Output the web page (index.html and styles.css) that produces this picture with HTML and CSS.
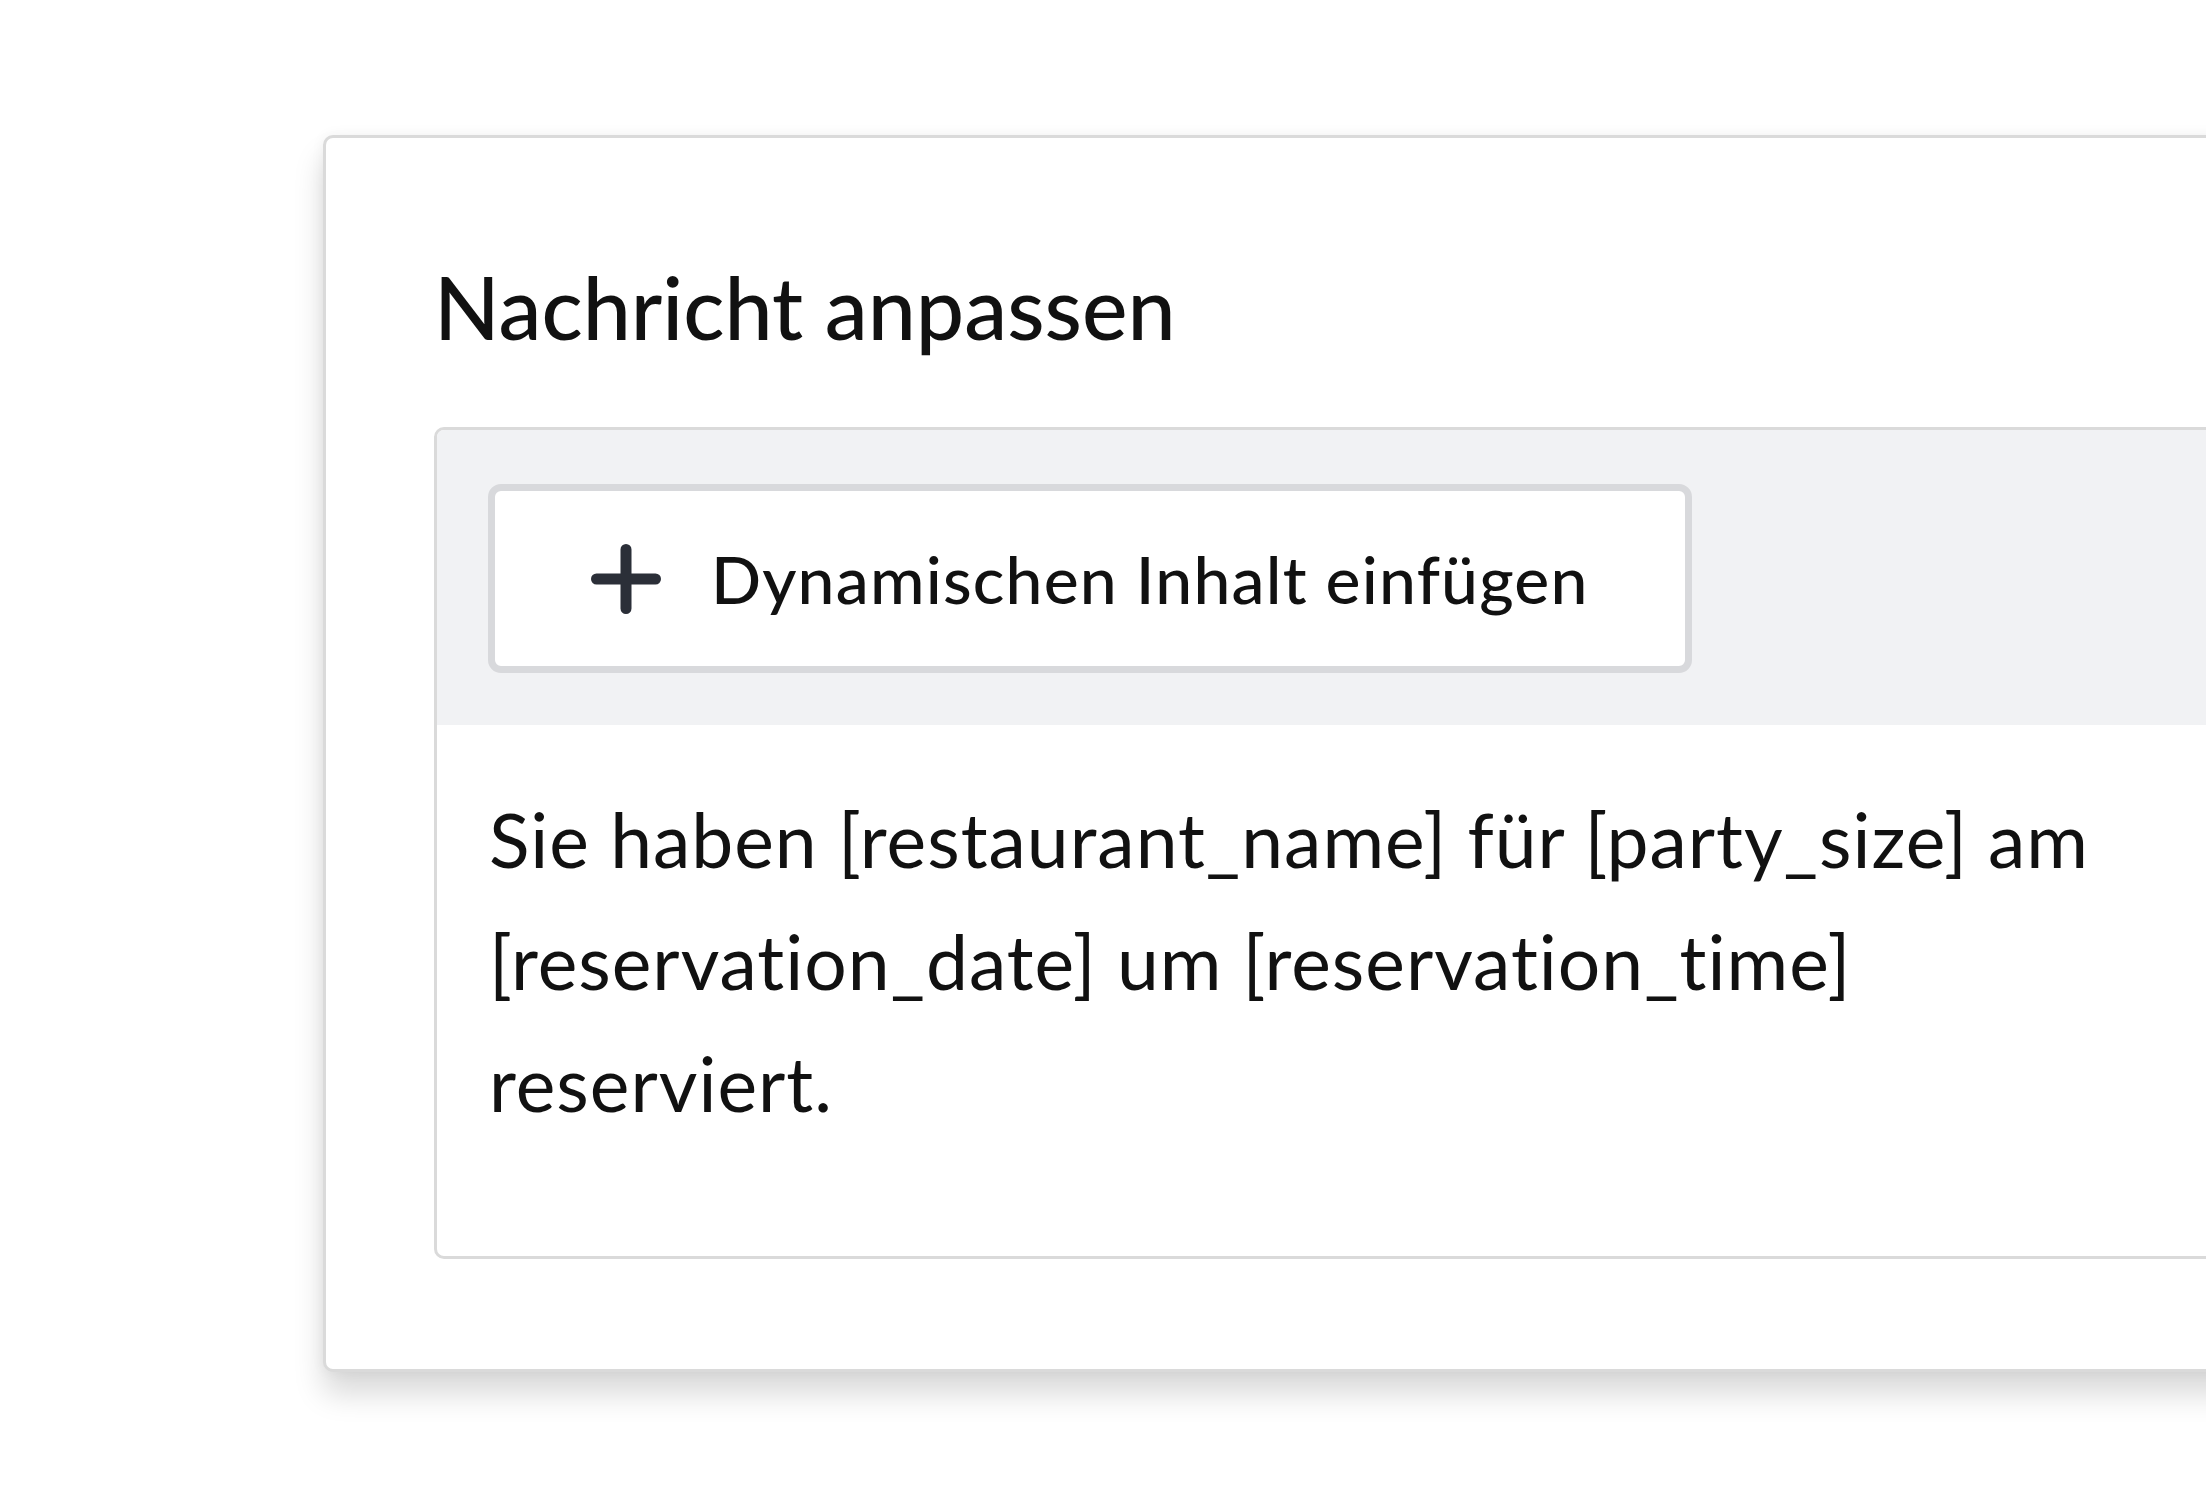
FILE: index.html
```html
<!DOCTYPE html>
<html lang="de">
<head>
  <meta charset="UTF-8" />
  <meta name="viewport" content="width=device-width, initial-scale=1.0"/>
  <title>Nachricht anpassen</title>
  <link rel="stylesheet" href="styles.css">
</head>
<body>

  <main class="stage">
    <section class="card">
      <h1 class="card-title">Nachricht anpassen</h1>

      <div class="editor">
        <div class="toolbar">
          <button class="insert-btn" type="button">
            <svg class="plus" width="70" height="70" viewBox="0 0 70 70" aria-hidden="true">
              <path d="M35 5.5 V64.5 M5.5 35 H64.5" fill="none" stroke="#2b2f38" stroke-width="11" stroke-linecap="round"/>
            </svg>
            <span>Dynamischen Inhalt einfügen</span>
          </button>
        </div>

        <p class="message">Sie haben [restaurant_name] für [party_size] am [reservation_date] um [reservation_time] reserviert.</p>
      </div>
    </section>
  </main>

</body>
</html>
```

FILE: styles.css
```css
:root {
  --text: #111;
  --line: #dadada;
  --toolbar: #f1f2f4;
  --btn-border: #d8d9dc;
  --icon: #2b2f38;
}

body {
  margin: 0;
  background: #fff;
  color: var(--text);
  font-family: Lato, "Open Sans", sans-serif;
  font-variant-ligatures: none;
  overflow: hidden;
}

.stage {
  padding: 135px 0 80px 323px;
}

.card {
  width: 2100px;
  background: #fff;
  border: 3px solid var(--line);
  border-radius: 10px;
  padding: 119px 0 110px 108px;
  box-shadow: 0 22px 30px rgba(0,0,0,0.15), 0 0 14px rgba(0,0,0,0.05);
}

.card-title {
  margin: 0;
  font-size: 86px;
  line-height: 100px;
  font-weight: 500;
}

.editor {
  margin-top: 70px;
  border: 3px solid var(--line);
  border-radius: 10px;
  overflow: hidden;
}

.toolbar {
  background: var(--toolbar);
  padding: 54px 0 52px 51px;
}

.insert-btn {
  display: flex;
  align-items: center;
  gap: 50px;
  box-sizing: border-box;
  width: 1204px;
  height: 189px;
  padding: 0 0 0 96px;
  background: #fff;
  border: 7px solid var(--btn-border);
  border-radius: 13px;
  font-family: inherit;
  font-size: 66px;
  font-weight: 500;
  letter-spacing: 1.2px;
  color: var(--text);
  cursor: pointer;
}

.plus {
  flex: none;
  display: block;
}

.message {
  margin: 0;
  max-width: 1650px;
  padding: 53px 0 112px 52px;
  font-size: 75px;
  line-height: 122px;
  letter-spacing: 1px;
}
```
